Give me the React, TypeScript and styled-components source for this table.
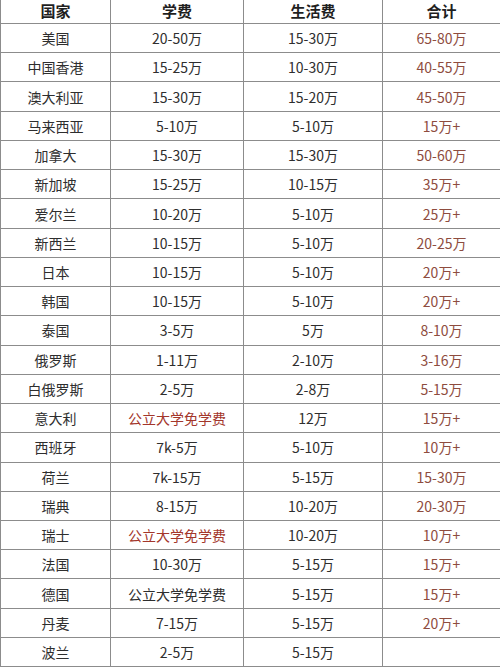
import React from 'react';
import styled, { createGlobalStyle } from 'styled-components';

const GlobalStyle = createGlobalStyle`
  html, body {
    margin: 0;
    padding: 0;
    background: #fff;
  }
  body {
    font-family: "Noto Sans CJK SC", "Noto Sans", sans-serif;
    color: #2b2b2b;
  }
`;

const Table = styled.div`
  display: grid;
  grid-template-columns: 109px 132px 138px 117px;
  grid-template-rows: 23px;
  grid-auto-rows: 28.24px;
  gap: 1px;
  width: 500px;
  height: 667px;
  overflow: hidden;
  background: #8c8c8c;
  border-left: 1px solid #8c8c8c;
  box-sizing: border-box;
`;

type Tone = 'plain' | 'total' | 'red';

const toneColor: Record<Tone, string> = {
  plain: '#2e2e2e',
  total: '#8e4c3e',
  red: '#a3362b',
};

const Cell = styled.div<{ $tone?: Tone }>`
  display: flex;
  align-items: center;
  justify-content: center;
  background: #fff;
  font-size: 14px;
  line-height: 1;
  color: ${(p) => toneColor[p.$tone || 'plain']};
  white-space: nowrap;
`;

const HeadCell = styled(Cell)`
  font-size: 15px;
  font-weight: 700;
  color: #1f1f1f;
  padding-bottom: 2px;
`;

interface Row {
  country: string;
  tuition: string;
  living: string;
  total: string;
  freeRed?: boolean;
}

const rows: Row[] = [
  { country: '美国', tuition: '20-50万', living: '15-30万', total: '65-80万' },
  { country: '中国香港', tuition: '15-25万', living: '10-30万', total: '40-55万' },
  { country: '澳大利亚', tuition: '15-30万', living: '15-20万', total: '45-50万' },
  { country: '马来西亚', tuition: '5-10万', living: '5-10万', total: '15万+' },
  { country: '加拿大', tuition: '15-30万', living: '15-30万', total: '50-60万' },
  { country: '新加坡', tuition: '15-25万', living: '10-15万', total: '35万+' },
  { country: '爱尔兰', tuition: '10-20万', living: '5-10万', total: '25万+' },
  { country: '新西兰', tuition: '10-15万', living: '5-10万', total: '20-25万' },
  { country: '日本', tuition: '10-15万', living: '5-10万', total: '20万+' },
  { country: '韩国', tuition: '10-15万', living: '5-10万', total: '20万+' },
  { country: '泰国', tuition: '3-5万', living: '5万', total: '8-10万' },
  { country: '俄罗斯', tuition: '1-11万', living: '2-10万', total: '3-16万' },
  { country: '白俄罗斯', tuition: '2-5万', living: '2-8万', total: '5-15万' },
  { country: '意大利', tuition: '公立大学免学费', living: '12万', total: '15万+', freeRed: true },
  { country: '西班牙', tuition: '7k-5万', living: '5-10万', total: '10万+' },
  { country: '荷兰', tuition: '7k-15万', living: '5-15万', total: '15-30万' },
  { country: '瑞典', tuition: '8-15万', living: '10-20万', total: '20-30万' },
  { country: '瑞士', tuition: '公立大学免学费', living: '10-20万', total: '10万+', freeRed: true },
  { country: '法国', tuition: '10-30万', living: '5-15万', total: '15万+' },
  { country: '德国', tuition: '公立大学免学费', living: '5-15万', total: '15万+' },
  { country: '丹麦', tuition: '7-15万', living: '5-15万', total: '20万+' },
  { country: '波兰', tuition: '2-5万', living: '5-15万', total: '' },
];

const App: React.FC = () => (
  <>
    <GlobalStyle />
    <Table>
      <HeadCell>国家</HeadCell>
      <HeadCell>学费</HeadCell>
      <HeadCell>生活费</HeadCell>
      <HeadCell>合计</HeadCell>
      {rows.map((r) => (
        <React.Fragment key={r.country}>
          <Cell>{r.country}</Cell>
          <Cell $tone={r.freeRed ? 'red' : 'plain'}>{r.tuition}</Cell>
          <Cell>{r.living}</Cell>
          <Cell $tone="total">{r.total}</Cell>
        </React.Fragment>
      ))}
    </Table>
  </>
);

export default App;
